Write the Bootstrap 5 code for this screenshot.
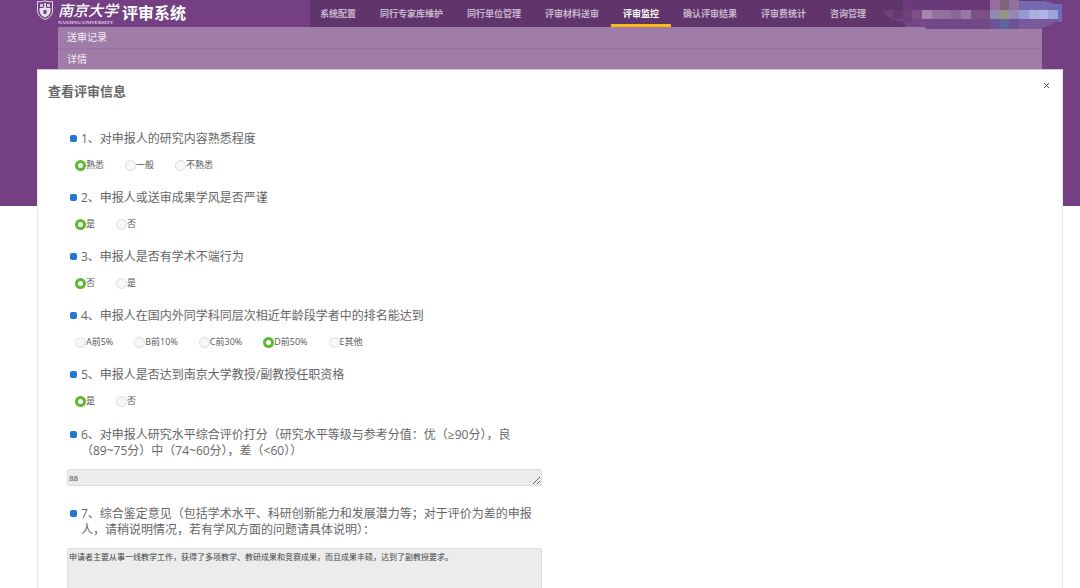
<!DOCTYPE html>
<html lang="zh-CN">
<head>
<meta charset="utf-8">
<meta name="viewport" content="width=device-width, initial-scale=1">
<title>评审系统</title>
<link href="https://cdn.jsdelivr.net/npm/bootstrap@5.3.0/dist/css/bootstrap.min.css" rel="stylesheet">
<style>
html{scrollbar-width:none}
body{font-family:"Open Sans","Noto Sans CJK SC",sans-serif;color:#555;background:#fff linear-gradient(#744083,#744083) no-repeat;background-size:100% 206px}
.topbar{height:27px}
.site-brand{width:310px;padding-left:37px;color:#fff;text-decoration:none}
.site-brand:hover{color:#fff}
.school{width:60px;margin:0 4px 0 5px}
.school-cn{font-size:15px;line-height:20px;font-style:italic;font-weight:500;white-space:nowrap}
.school-en{font:700 5px/6px "Liberation Serif",serif;white-space:nowrap;color:#e3d8e6}
.system-name{font-size:16px;line-height:27px;font-weight:700;white-space:nowrap}
.menu{background:#5f356b;margin-right:177px;white-space:nowrap}
.menu a{font-size:9px;line-height:28px;height:27px;font-weight:700;color:#c8b5cd;text-decoration:none;padding:0 12px}
.menu a:first-child{padding-left:10px}
.menu a.active{color:#fff;box-shadow:inset 0 -3px #fdb913}
.account{right:16px;top:0}
.crumbs{margin:0 38px 0 58px;background:#a07ca9}
.crumbs a{display:block;height:21px;line-height:21px;padding-left:9px;font-size:10px;color:#f3edf5;text-decoration:none}
.crumbs a+a{border-top:1px solid #9871a2}
.sheet{margin:0 17px 0 37px;background:#fff;border:1px solid #e8e6e9;border-top-color:#d2c0d6;padding:0 10px 20px}
.sheet h2{font-size:13px;line-height:20px;font-weight:700;color:#666;margin:11px 0 0}
.closer{border:0;background:none;padding:0;width:12px;height:12px;margin-top:10px;line-height:0}
.form-area{max-width:475px;margin:30px 0 0 19px}
.ask{display:block;float:none;font-size:12px;line-height:16px;color:#666;padding-left:14px;margin:0;white-space:nowrap;position:relative}
.ask::before{content:"";position:absolute;left:3px;top:4px;width:7px;height:7px;border-radius:2px;background:#2277d2}
.opts{font-size:9px;line-height:12px;color:#555;padding-left:8px;gap:21px;margin-top:12px}
.opts input{appearance:none;width:11px;height:11px;margin:0;border:1px solid #ddd;border-radius:50%;background:#f7f7f7}
.opts input:checked{border:3px solid #5fb92c;background:#fff}
fieldset{height:59px}
.written{padding-top:1px}
textarea{display:block;width:100%;font-size:8px;line-height:12px;padding:2px 1px;color:#444;background:#ececec;border:1px solid #ddd;border-radius:2px;overflow:hidden;margin:10px 0 20px}
.score{height:17px}
.opinion{height:90px}
</style>
</head>
<body>
<header class="topbar d-flex position-relative">
  <a class="site-brand d-flex flex-shrink-0" href="#">
    <svg width="16" height="20" viewBox="0 0 16 20" aria-hidden="true">
      <path d="M.5 1.5Q4 2.500 8 .8Q12 2.500 15.500 1.500V11Q15 17 8 19.500Q1 17 .5 11Z" fill="#744083" stroke="#e4d9e7"/>
      <path d="M3 4h3v3H3zM10 4h3v3h-3zM7 3h2v4H7z" fill="#d9cadd"/>
      <path d="M2.500 8H6L8 6.500 10 8h3.500v3Q13 15.500 8 17.500 3 15.500 2.500 11Z" fill="#e9e1eb"/>
      <path d="M6.500 10h3v4h-3z" fill="#744083"/>
    </svg>
    <span class="school d-flex flex-column">
      <span class="school-cn">南京大学</span>
      <span class="school-en">NANJING UNIVERSITY</span>
    </span>
    <span class="system-name">评审系统</span>
  </a>
  <nav class="menu d-flex flex-grow-1">
    <a href="#">系统配置</a><a href="#">同行专家库维护</a><a href="#">同行单位管理</a><a href="#">评审材料送审</a><a href="#" class="active" aria-current="page">评审监控</a><a href="#">确认评审结果</a><a href="#">评审费统计</a><a href="#">咨询管理</a>
  </nav>
  <svg class="account position-absolute" width="184" height="29" viewBox="0 0 184 29" shape-rendering="crispEdges" aria-hidden="true">
    <path fill="#6a3977" d="M23 0h145v29H46l-2-2H23z"/>
    <path fill="#744886" d="M10 19h120v10H46l-2-2H26v-4z"/>
    <path fill="#6d3a7e" d="M23 0h9v22h-9z"/>
    <path fill="#673872" d="M3 10h30v9H12Q4 16 3 10z"/>
    <path fill="#6f4179" d="M3 10h10v9Q5 17 3 10zM23 10h9v9h-9z"/>
    <path fill="#7b5086" d="M32 10h10v9H32zM91 10h19v9H91z"/>
    <path fill="#a685ae" d="M42 10h10v9H42z"/>
    <path fill="#93709e" d="M52 10h10v9H52zM62 10h9v9h-9z"/>
    <path fill="#8b6596" d="M71 10h10v9H71z"/>
    <path fill="#9878a3" d="M81 10h10v9H81z"/>
    <path fill="#946e9e" d="M110 0h10v10h-10zM129 0h10v10h-10z"/>
    <path fill="#80637d" d="M120 0h9v10h-9z"/>
    <path fill="#9088ae" d="M110 10h10v9h-10z"/>
    <path fill="#989587" d="M120 10h9v9h-9z"/>
    <path fill="#9486b5" d="M129 10h10v9h-10z"/>
    <path fill="#6b5395" d="M110 19h10v10h-10zM129 19h10v10h-10z"/>
    <path fill="#5d64a0" d="M120 19h9v10h-9z"/>
    <path fill="#7b5a9b" d="M139 19h40q-2 4-10 6l-8 4h-22z"/>
    <path fill="#7468ae" d="M139 1q28-2 38 4l5 5h-43z"/>
    <path fill="#744083" d="M163 0h21v29h-18v-2l12-5 5-8-6-9-14-5z"/>
    <path fill="#6c6db5" d="M176 4h6v18h-4v-3z"/>
    <path fill="#929bd8" d="M139 10h10v9h-10z"/>
    <path fill="#a9aedd" d="M149 10h10v9h-10z"/>
    <path fill="#b0b6e3" d="M159 10h9v9h-9z"/>
    <path fill="#9ba5dc" d="M168 10h10v9h-10z"/>
  </svg>
</header>
<nav class="crumbs"><a href="#">送审记录</a><a href="#">详情</a></nav>
<main class="sheet">
  <div class="d-flex justify-content-between">
    <h2>查看评审信息</h2>
    <button class="closer" type="button" aria-label="关闭"><svg width="12" height="12" viewBox="0 0 12 12"><path d="m4 3 5 5M9 3 4 8" stroke="#555"/></svg></button>
  </div>
  <form class="form-area">
    <fieldset>
      <legend class="ask">1、对申报人的研究内容熟悉程度</legend>
      <div class="opts d-flex">
        <label class="d-flex align-items-center"><input type="radio" name="q1" checked>熟悉</label>
        <label class="d-flex align-items-center"><input type="radio" name="q1">一般</label>
        <label class="d-flex align-items-center"><input type="radio" name="q1">不熟悉</label>
      </div>
    </fieldset>
    <fieldset>
      <legend class="ask">2、申报人或送审成果学风是否严谨</legend>
      <div class="opts d-flex">
        <label class="d-flex align-items-center"><input type="radio" name="q2" checked>是</label>
        <label class="d-flex align-items-center"><input type="radio" name="q2">否</label>
      </div>
    </fieldset>
    <fieldset>
      <legend class="ask">3、申报人是否有学术不端行为</legend>
      <div class="opts d-flex">
        <label class="d-flex align-items-center"><input type="radio" name="q3" checked>否</label>
        <label class="d-flex align-items-center"><input type="radio" name="q3">是</label>
      </div>
    </fieldset>
    <fieldset>
      <legend class="ask">4、申报人在国内外同学科同层次相近年龄段学者中的排名能达到</legend>
      <div class="opts d-flex">
        <label class="d-flex align-items-center"><input type="radio" name="q4">A前5%</label>
        <label class="d-flex align-items-center"><input type="radio" name="q4">B前10%</label>
        <label class="d-flex align-items-center"><input type="radio" name="q4">C前30%</label>
        <label class="d-flex align-items-center"><input type="radio" name="q4" checked>D前50%</label>
        <label class="d-flex align-items-center"><input type="radio" name="q4">E其他</label>
      </div>
    </fieldset>
    <fieldset>
      <legend class="ask">5、申报人是否达到南京大学教授/副教授任职资格</legend>
      <div class="opts d-flex">
        <label class="d-flex align-items-center"><input type="radio" name="q5" checked>是</label>
        <label class="d-flex align-items-center"><input type="radio" name="q5">否</label>
      </div>
    </fieldset>
    <div class="written">
      <label class="ask" for="score">6、对申报人研究水平综合评价打分（研究水平等级与参考分值：优（≥90分），良<br>（89~75分）中（74~60分），差（&lt;60））</label>
      <textarea class="score" id="score" readonly>88</textarea>
      <label class="ask" for="opinion">7、综合鉴定意见（包括学术水平、科研创新能力和发展潜力等；对于评价为差的申报<br>人，请稍说明情况，若有学风方面的问题请具体说明）：</label>
      <textarea class="opinion" id="opinion" readonly>申请者主要从事一线教学工作，获得了多项教学、教研成果和竞赛成果，而且成果丰硕，达到了副教授要求。</textarea>
    </div>
  </form>
</main>
<script src="https://cdn.jsdelivr.net/npm/bootstrap@5.3.0/dist/js/bootstrap.bundle.min.js"></script>
</body>
</html>
